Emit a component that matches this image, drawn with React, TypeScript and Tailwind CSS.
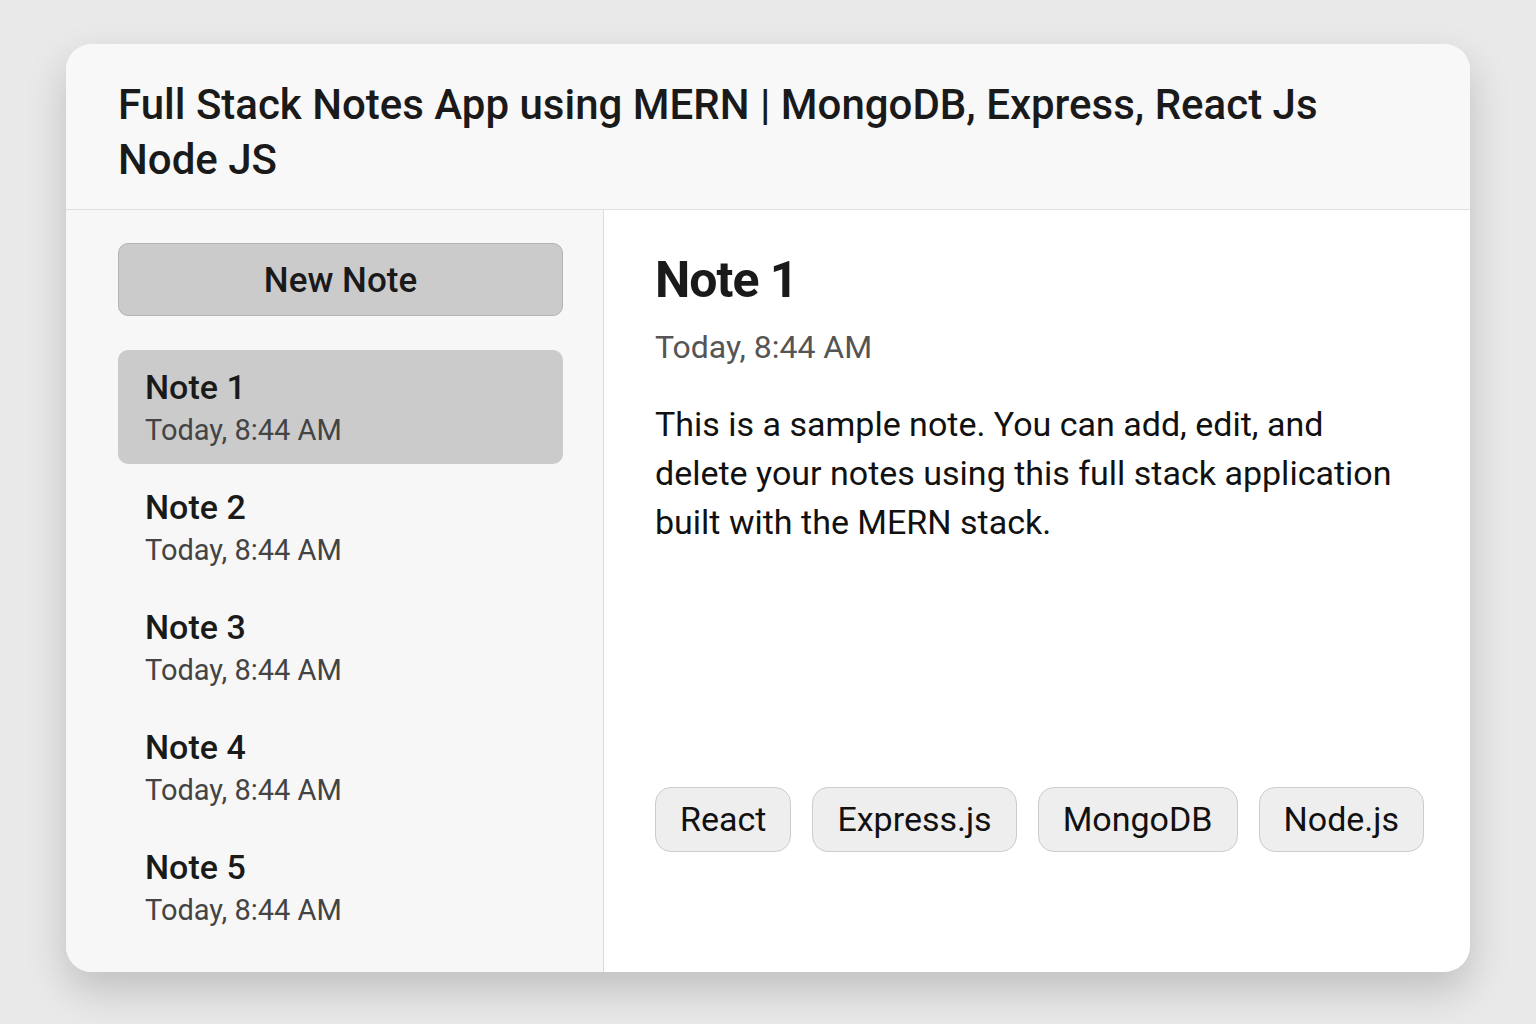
import React from 'react';

const notes = [1, 2, 3, 4, 5].map((n) => ({ id: n, title: `Note ${n}`, date: 'Today, 8:44 AM' }));
const tags = ['React', 'Express.js', 'MongoDB', 'Node.js'];

export default function App() {
  const font = { fontFamily: 'Roboto, "Liberation Sans", Arial, sans-serif' };
  return (
    <div className="min-h-screen w-full bg-[#e9e9e9] flex items-start justify-center pt-[44px]" style={font}>
      <div className="w-[1404px] h-[928px] bg-white rounded-[26px] overflow-hidden flex flex-col shadow-[0_18px_40px_rgba(0,0,0,0.18)]">
        <header className="h-[166px] shrink-0 bg-[#f8f8f8] border-b border-[#e0e0e0] px-[52px] pt-[33px]">
          <h1 className="text-[42px] leading-[55px] font-medium text-[#1a1a1a]">
            Full Stack Notes App using MERN | MongoDB, Express, React Js
            <br />
            Node JS
          </h1>
        </header>
        <div className="flex flex-1 min-h-0">
          <aside className="w-[538px] shrink-0 bg-[#f7f7f7] border-r border-[#dcdcdc] px-[52px] pt-[33px] pr-[40px]">
            <button className="w-full h-[73px] pt-[4px] rounded-[10px] bg-[#cbcbcb] border border-[#b4b4b4] text-[35px] text-[#1a1a1a] font-medium">
              New Note
            </button>
            <ul className="mt-[34px] flex flex-col gap-[6px]">
              {notes.map((note) => (
                <li
                  key={note.id}
                  className={`h-[114px] rounded-[10px] px-[27px] pt-[15px] ${note.id === 1 ? 'bg-[#cbcbcb]' : ''}`}
                >
                  <div className="text-[34px] leading-[44px] font-medium text-[#1a1a1a]">{note.title}</div>
                  <div className="text-[29px] leading-[38px] text-[#444444] mt-[2px]">{note.date}</div>
                </li>
              ))}
            </ul>
          </aside>
          <main className="flex-1 flex flex-col px-[51px] pt-[41px]">
            <h2 className="text-[50px] leading-[58px] font-bold text-[#1a1a1a] tracking-[-1px]">Note 1</h2>
            <div className="text-[32px] leading-[38px] text-[#555555] mt-[19px]">Today, 8:44 AM</div>
            <p className="text-[34px] leading-[49px] text-[#111111] mt-[34px] max-w-[752px]">
              This is a sample note. You can add, edit, and delete your notes using this full stack application built with
              the MERN stack.
            </p>
            <div className="flex gap-[21px] mt-[240px]">
              {tags.map((tag) => (
                <span
                  key={tag}
                  className="h-[65px] px-[24px] flex items-center rounded-[16px] bg-[#eeeeee] border border-[#cccccc] text-[34px] text-[#111111]"
                >
                  {tag}
                </span>
              ))}
            </div>
          </main>
        </div>
      </div>
    </div>
  );
}
